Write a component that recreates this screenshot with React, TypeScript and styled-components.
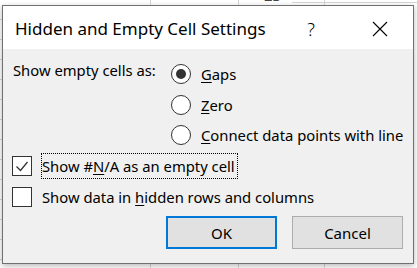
import React from "react";
import styled, { createGlobalStyle } from "styled-components";

const Global = createGlobalStyle`
  html, body { margin: 0; padding: 0; }
  body {
    width: 417px;
    height: 268px;
    overflow: hidden;
    font-family: "Noto Sans", "DejaVu Sans", sans-serif;
    color: #000;
  }
`;

const grid = "#d6d6d6";

const Sheet = styled.div`
  position: relative;
  width: 417px;
  height: 268px;
  overflow: hidden;
  background:
    linear-gradient(${grid}, ${grid}) 150px 0 / 1px 100% no-repeat,
    linear-gradient(${grid}, ${grid}) 238px 0 / 1px 100% no-repeat,
    linear-gradient(${grid}, ${grid}) 324px 0 / 1px 100% no-repeat,
    linear-gradient(${grid}, ${grid}) 292px 2px / 125px 1px no-repeat,
    repeating-linear-gradient(to bottom, transparent 0 19px, ${grid} 19px 20px) 0 0 / 2px 100% no-repeat,
    #fff;
`;

const CellText = styled.span`
  position: absolute;
  left: 264px;
  top: -13px;
  font-size: 15px;
  line-height: 16px;
  color: #444;
`;

const Dialog = styled.div`
  position: absolute;
  left: 2px;
  top: 5px;
  width: 412px;
  height: 259px;
  box-sizing: border-box;
  border: 1px solid #707070;
  box-shadow: 0 2px 6px rgba(0, 0, 0, 0.28);
  display: flex;
  flex-direction: column;
  background: #f0f0f0;
`;

const TitleBar = styled.div`
  height: 43px;
  flex: none;
  background: #fff;
  display: flex;
  align-items: center;
  padding: 2px 13px 0 12px;
  box-sizing: border-box;
`;

const Title = styled.div`
  flex: 1;
  font-size: 17px;
  line-height: 22px;
  white-space: nowrap;
`;

const TitleButton = styled.div<{ $gap?: number }>`
  width: 40px;
  height: 30px;
  display: flex;
  align-items: center;
  justify-content: center;
  margin-left: ${(p) => p.$gap ?? 0}px;
  font-size: 18px;
  font-weight: 300;
`;

const Content = styled.div`
  flex: 1;
  display: flex;
  flex-direction: column;
  padding: 13px 10px 0 10px;
  font-size: 14.8px;
  line-height: 20px;
`;

const EmptyRow = styled.div`
  display: grid;
  grid-template-columns: 158px 1fr;
  align-items: start;
`;

const FieldLabel = styled.div`
  margin-top: -2px;
  white-space: nowrap;
`;

const RadioGroup = styled.div`
  display: flex;
  flex-direction: column;
  gap: 10.5px;
  padding-top: 2px;
`;

const RadioItem = styled.div`
  display: flex;
  align-items: center;
  gap: 10px;
  height: 20px;
  white-space: nowrap;
`;

const RadioCircle = styled.span<{ $checked?: boolean }>`
  width: 20px;
  height: 20px;
  box-sizing: border-box;
  border: 1px solid #333;
  border-radius: 50%;
  background: #fff;
  display: flex;
  align-items: center;
  justify-content: center;
  flex: none;
  &::after {
    content: "";
    display: ${(p) => (p.$checked ? "block" : "none")};
    width: 10px;
    height: 10px;
    border-radius: 50%;
    background: #333;
  }
`;

const Key = styled.span`
  text-decoration: underline;
  text-underline-offset: 2px;
  text-decoration-thickness: 1px;
`;

const CheckGroup = styled.div`
  display: flex;
  flex-direction: column;
  gap: 5px;
  margin-top: 8px;
  margin-left: -1px;
`;

const CheckRow = styled.div`
  display: flex;
  align-items: center;
  height: 26px;
  white-space: nowrap;
`;

const CheckBox = styled.span`
  width: 20px;
  height: 20px;
  box-sizing: border-box;
  border: 1px solid #333;
  background: #fff;
  flex: none;
  display: flex;
  align-items: center;
  justify-content: center;
`;

const CheckLabel = styled.span<{ $focused?: boolean }>`
  margin-left: 9px;
  padding: 2px 0;
  border: 1px ${(p) => (p.$focused ? "dotted #000" : "solid transparent")};
  padding-right: ${(p) => (p.$focused ? 2 : 0)}px;
`;

const ButtonRow = styled.div`
  display: flex;
  justify-content: flex-end;
  gap: 15px;
  margin-top: 6px;
`;

const Button = styled.div<{ $default?: boolean }>`
  width: 111px;
  height: 33px;
  box-sizing: border-box;
  background: #e1e1e1;
  border: ${(p) => (p.$default ? "2px solid #0078d7" : "1px solid #adadad")};
  display: flex;
  align-items: center;
  justify-content: center;
  font-size: 15px;
`;

export default function App() {
  return (
    <>
      <Global />
      <Sheet>
        <CellText>23</CellText>
        <Dialog>
          <TitleBar>
            <Title>Hidden and Empty Cell Settings</Title>
            <TitleButton>?</TitleButton>
            <TitleButton $gap={29}>
              <svg width="16" height="16" viewBox="0 0 16 16">
                <path d="M1 1 L15 15 M15 1 L1 15" stroke="#000" strokeWidth="1.1" fill="none" />
              </svg>
            </TitleButton>
          </TitleBar>
          <Content>
            <EmptyRow>
              <FieldLabel>Show empty cells as:</FieldLabel>
              <RadioGroup>
                <RadioItem>
                  <RadioCircle $checked />
                  <span>
                    <Key>G</Key>aps
                  </span>
                </RadioItem>
                <RadioItem>
                  <RadioCircle />
                  <span>
                    <Key>Z</Key>ero
                  </span>
                </RadioItem>
                <RadioItem>
                  <RadioCircle />
                  <span>
                    <Key>C</Key>onnect data points with line
                  </span>
                </RadioItem>
              </RadioGroup>
            </EmptyRow>
            <CheckGroup>
              <CheckRow>
                <CheckBox>
                  <svg width="18" height="18" viewBox="0 0 18 18">
                    <path d="M3.5 9.5 L7.5 13.5 L14.5 5" stroke="#333" strokeWidth="1.3" fill="none" />
                  </svg>
                </CheckBox>
                <CheckLabel $focused>
                  Show #<Key>N</Key>/A as an empty cell
                </CheckLabel>
              </CheckRow>
              <CheckRow>
                <CheckBox />
                <CheckLabel>
                  Show data in <Key>h</Key>idden rows and columns
                </CheckLabel>
              </CheckRow>
            </CheckGroup>
            <ButtonRow>
              <Button $default>OK</Button>
              <Button>Cancel</Button>
            </ButtonRow>
          </Content>
        </Dialog>
      </Sheet>
    </>
  );
}
